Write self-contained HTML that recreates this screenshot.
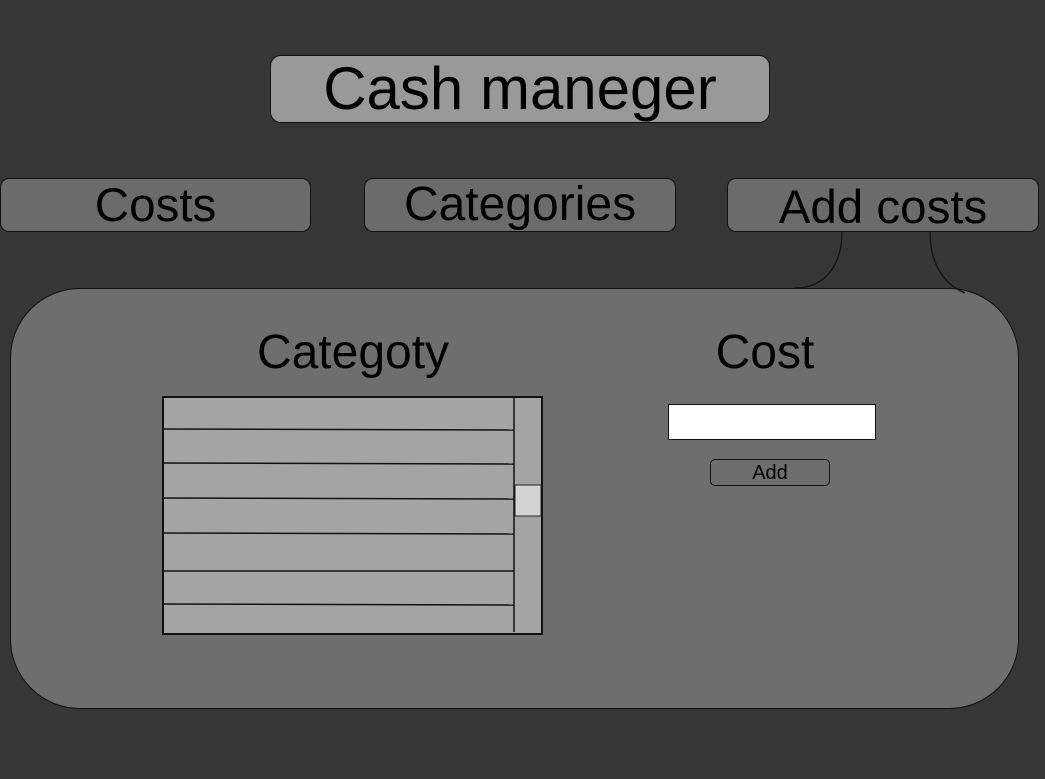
<!DOCTYPE html>
<html><head><style>
body{margin:0;width:1045px;height:779px;background:#363636;position:relative;overflow:hidden;font-family:"Liberation Sans",sans-serif;}
.a{position:absolute;box-sizing:border-box;}
.btn{border:1px solid #111;background:#6b6b6b;border-radius:9px;text-align:center;color:#000;}
</style></head><body>
<div class="a btn" style="left:270px;top:55px;width:500px;height:68px;background:#9a999a;border-radius:11px;font-size:60px;line-height:66px;">Cash maneger</div>
<div class="a btn" style="left:0;top:178px;width:311px;height:54px;font-size:47.5px;line-height:54px;">Costs</div>
<div class="a btn" style="left:364px;top:178px;width:312px;height:54px;font-size:48px;line-height:52px;">Categories</div>
<div class="a btn" style="left:727px;top:178px;width:312px;height:54px;font-size:47.5px;line-height:58px;">Add costs</div>
<div class="a" style="left:10px;top:288px;width:1009px;height:421px;background:#6e6e6e;border:1px solid #111;border-radius:70px;"></div>
<svg class="a" style="left:0;top:0" width="1045" height="779"><path d="M842 232 C842 265 825 288 795 288" fill="none" stroke="#111" stroke-width="1.3"/><path d="M930 232 C930 265 945 285 965 293" fill="none" stroke="#111" stroke-width="1.3"/></svg>
<div class="a" style="left:200px;top:325px;width:306px;text-align:center;font-size:48px;line-height:56px;">Categoty</div>
<div class="a" style="left:665px;top:325px;width:200px;text-align:center;font-size:48px;line-height:56px;">Cost</div>
<div class="a" style="left:162px;top:396px;width:381px;height:239px;background:#a4a4a4;border:2px solid #111;"></div>
<svg class="a" style="left:0;top:0" width="1045" height="779" stroke="#111" stroke-width="1.5">
<line x1="163" y1="429" x2="514" y2="430"/><line x1="163" y1="463" x2="514" y2="464"/><line x1="163" y1="498" x2="514" y2="499"/><line x1="163" y1="533" x2="514" y2="534"/><line x1="163" y1="571" x2="514" y2="571"/><line x1="163" y1="604" x2="514" y2="605"/><line x1="514" y1="396" x2="514" y2="632"/>
<rect x="515" y="485" width="26" height="31" fill="#d3d3d3" stroke="#222" stroke-width="1"/></svg>
<div class="a" style="left:668px;top:404px;width:208px;height:36px;background:#fff;border:1px solid #111;"></div>
<div class="a btn" style="left:710px;top:459px;width:120px;height:27px;border-radius:5px;background:#6e6e6e;font-size:20px;line-height:27px;">Add</div>
</body></html>
